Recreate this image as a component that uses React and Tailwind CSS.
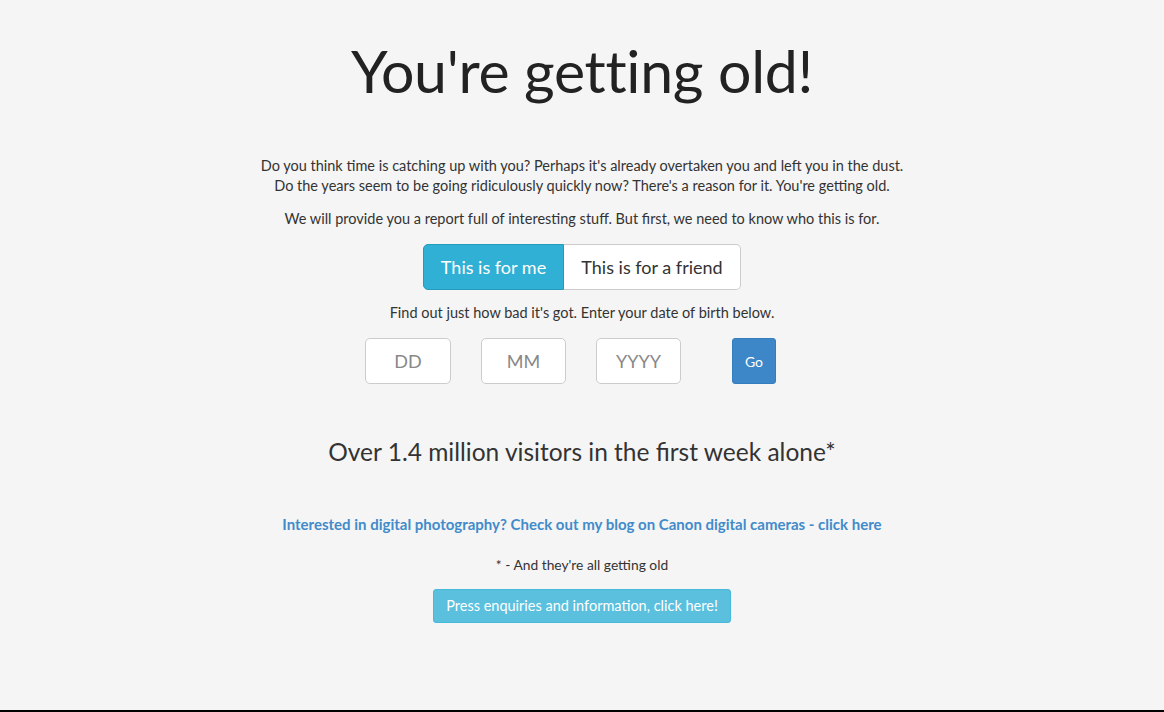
export default function App() {
  return (
    <div className="min-h-[712px] bg-[#f5f5f5] border-b-2 border-black text-[#333] font-['Lato','Open_Sans',sans-serif] flex flex-col">
      <div className="flex-1 flex flex-col items-center text-center">
        <h1 className="mt-[35px] text-[59px] leading-[72px] text-[#222] tracking-[-0.3px]">You're getting old!</h1>

        <div className="mt-[49px] text-[14.5px] leading-[20px]">
          <p>Do you think time is catching up with you? Perhaps it's already overtaken you and left you in the dust.</p>
          <p>Do the years seem to be going ridiculously quickly now? There's a reason for it. You're getting old.</p>
        </div>
        <p className="mt-[13px] text-[14.5px] leading-[20px]">We will provide you a report full of interesting stuff. But first, we need to know who this is for.</p>

        <div className="mt-[15px] flex">
          <button className="h-[46px] w-[141px] bg-[#31b0d5] text-white text-[18px] rounded-l-[5px] border border-[#269abc]">This is for me</button>
          <button className="h-[46px] w-[177px] bg-white text-[#333] text-[18px] rounded-r-[5px] border border-l-0 border-[#ccc]">This is for a friend</button>
        </div>

        <p className="mt-[13px] text-[14.5px] leading-[20px]">Find out just how bad it's got. Enter your date of birth below.</p>

        <div className="mt-[15px] mr-[23px] flex items-center">
          <input placeholder="DD" className="h-[46px] w-[86px] bg-white border border-[#ccc] rounded-[5px] text-center text-[18px] placeholder:text-[#888] outline-none" />
          <input placeholder="MM" className="ml-[30px] h-[46px] w-[85px] bg-white border border-[#ccc] rounded-[5px] text-center text-[18px] placeholder:text-[#888] outline-none" />
          <input placeholder="YYYY" className="ml-[30px] h-[46px] w-[85px] bg-white border border-[#ccc] rounded-[5px] text-center text-[18px] placeholder:text-[#888] outline-none" />
          <button className="ml-[51px] h-[46px] w-[44px] bg-[#3d87c8] border border-[#357ebd] rounded-[3px] text-white text-[14px]">Go</button>
        </div>

        <h2 className="mt-[52px] text-[24.5px] leading-[32px] text-[#333]">Over 1.4 million visitors in the first week alone*</h2>

        <a href="#" className="mt-[46px] text-[15px] leading-[20px] font-bold text-[#428bca]">Interested in digital photography? Check out my blog on Canon digital cameras - click here</a>

        <p className="mt-[21px] text-[13.8px] leading-[20px]">* - And they're all getting old</p>

        <button className="mt-[14px] h-[34px] px-[12px] bg-[#5bc0de] border border-[#46b8da] rounded-[3px] text-white text-[14.5px]">Press enquiries and information, click here!</button>
      </div>
    </div>
  );
}
